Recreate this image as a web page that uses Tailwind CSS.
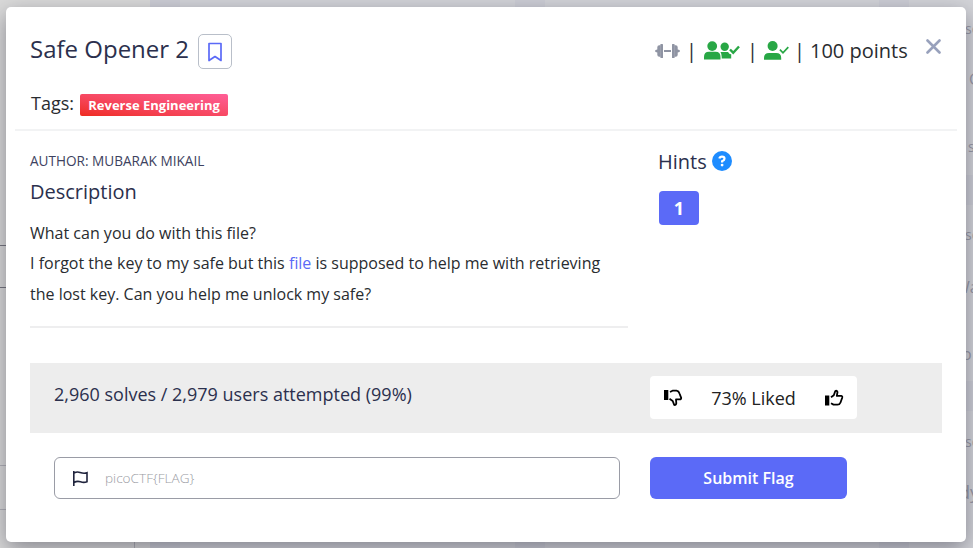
<!DOCTYPE html>
<html lang="en">
<head>
<meta charset="utf-8">
<title>Safe Opener 2</title>
<script src="https://cdn.jsdelivr.net/npm/@tailwindcss/browser@4"></script>
</head>
<body class="relative w-[973px] h-[548px] overflow-hidden bg-[#d3d4d9] font-['Open_Sans','Noto_Sans',sans-serif] text-[#292c30]">
<!-- Dimmed page behind the dialog -->
<div class="absolute inset-0 flex text-[#9a9ba8]" aria-hidden="true">
  <div class="w-[150px] bg-[#dadada]"></div>
  <div class="w-[30px] bg-[#cdced6]"></div>
  <div class="w-[335px]"></div>
  <div class="w-[30px] bg-[#cdced6]"></div>
  <div class="w-[334px]"></div>
  <div class="w-[30px] bg-[#cdced6]"></div>
  <div class="grow"></div>
  <div class="absolute left-0 top-[245px] w-2 h-[43px] border-y border-[#777780]"></div>
  <div class="absolute left-0 top-[465px] w-[135px] h-[45px] border-y border-[#b2b2b8]"></div>
  <div class="absolute left-[134px] top-[510px] w-px h-[38px] bg-[#b2b2b8]"></div>
  <div class="absolute left-[965px] top-[175px] w-2 h-[30px] bg-[#cdced6]"></div>
  <div class="absolute left-[965px] top-[381px] w-2 h-[30px] bg-[#cdced6]"></div>
  <span class="absolute left-[965px] top-[19px] text-sm">so</span>
  <span class="absolute left-[969px] top-[67px] text-base">G</span>
  <span class="absolute left-[968px] top-[137px] text-sm">so</span>
  <span class="absolute left-[965px] top-[225px] text-sm">so</span>
  <span class="absolute left-[955px] top-[275px] text-base">Wa</span>
  <span class="absolute left-[962px] top-[342px] text-base">o</span>
  <span class="absolute left-[965px] top-[432px] text-sm">so</span>
  <span class="absolute left-[959px] top-[478px] text-lg">dy</span>
</div>

<main class="relative ml-[6px] mt-[7px] w-[960px] h-[535px] rounded-[5px] bg-white shadow-[0_7px_22px_rgba(0,0,20,0.38)]">
  <header class="mx-[9px] h-[124px] border-b-2 border-[#f2f3f4] pl-[15px] pr-[16px]">
    <div class="flex h-[72px] items-start pt-[27px]">
      <h1 class="-mt-px w-[168px] whitespace-nowrap text-2xl leading-[32px] text-[#2b304d]">Safe Opener 2</h1>
      <button class="grid h-[35px] w-[34px] place-items-center rounded-[5px] border border-[#b9bfc9]" aria-label="Bookmark">
        <svg width="16" height="20" viewBox="0 0 16 20" fill="none" stroke="#5b6af7" stroke-width="1.7" stroke-linejoin="round"><path d="M2 1.5H14V18.5L8 14.5L2 18.5Z"/></svg>
      </button>
      <div class="ml-auto flex h-[34px] items-center text-xl">
        <svg class="-mt-px" width="25" height="16" viewBox="0 0 25 16" fill="#8f94a3"><path d="M5.4 1.6Q5.4 1 6 1H7.4Q8 1 8 1.6V14.4Q8 15 7.4 15H6Q5.4 15 5.4 14.4Z"/><path d="M5.7 2.2H4.3Q2.3 2.2 2.3 4.2V6.5Q0 6.7 0 8Q0 9.3 2.3 9.5V11.8Q2.3 13.8 4.3 13.8H5.7ZM9 7H16V9H9ZM17 1.6Q17 1 17.6 1H19Q19.6 1 19.6 1.6V14.4Q19.6 15 19 15H17.6Q17 15 17 14.4Z"/><path d="M19.3 2.2H20.7Q22.7 2.2 22.7 4.2V6.5Q25 6.7 25 8Q25 9.3 22.7 9.5V11.8Q22.7 13.8 20.7 13.8H19.3Z"/></svg>
        <span class="ml-[6px] w-[18px]">|</span>
        <svg width="36" height="20" viewBox="0 0 36 20" fill="#28a745"><circle cx="8.2" cy="5.1" r="4.9"/><path d="M0 18.6V16Q0 10.7 5 10.7H11.5Q16.5 10.7 16.5 16V18.6Z"/><circle cx="20.7" cy="5.7" r="4.2"/><path d="M16.5 11H24Q25.5 13.5 27.2 13.2V17.5H17.7V16Q17.7 13 16.5 11Z"/><path d="M26 8.5L29.2 11.7L35 5.5" fill="none" stroke="#28a745" stroke-width="2.4"/></svg>
        <span class="ml-[7px] w-[18px]">|</span>
        <svg class="-ml-[1px]" width="25" height="20" viewBox="0 0 25 20" fill="#28a745"><circle cx="8.6" cy="5" r="5"/><path d="M0 18.7V17Q0 12 5 12H12.2Q17.2 12 17.2 17V18.7Z"/><path d="M15.9 8.6L19 11.8L24.3 6.2" fill="none" stroke="#28a745" stroke-width="1.7"/></svg>
        <span class="ml-[5px] w-[16px]">|</span>
        <span class="w-[97px] whitespace-nowrap">100 points</span>
        <button class="mb-[10px] ml-[19px]" aria-label="Close"><svg width="15" height="15" viewBox="0 0 15 15" fill="none" stroke="#98a1bc" stroke-width="2.6" stroke-linecap="round"><path d="M1.5 1.5L13.5 13.5M13.5 1.5L1.5 13.5"/></svg></button>
      </div>
    </div>
    <div class="flex pl-px pt-[11px]">
      <span class="w-[49px] text-lg leading-[27px]">Tags:</span>
      <span class="mt-[4px] grid h-[22px] w-[148px] place-items-center whitespace-nowrap rounded-[2px] bg-gradient-to-tr from-[#ef2a1c] to-[#ff5e97] text-[13px] leading-[20px] font-bold text-white">Reverse Engineering</span>
    </div>
  </header>

  <div class="flex px-6">
    <section class="h-[197px] w-[598px] border-b-2 border-[#eeeeef] pt-[20px]">
      <div class="text-[13.6px] leading-[20px] text-[#3d4260]">AUTHOR: MUBARAK MIKAIL</div>
      <h2 class="mt-[6px] text-xl leading-[30px] text-[#2b304d]">Description</h2>
      <p class="mt-[11px] whitespace-nowrap text-base leading-[30.4px]">What can you do with this file?<br>I forgot the key to my safe but this <a class="text-[#5b6af7]">file</a> is supposed to help me with retrieving<br>the lost key. Can you help me unlock my safe?</p>
    </section>
    <section class="pl-[30px] pt-[16px]">
      <div class="flex items-center">
        <h2 class="w-[54px] text-xl leading-[30px] text-[#2b304d]">Hints</h2>
        <svg class="-mt-[3px]" width="20" height="20" viewBox="0 0 20 20"><circle cx="10" cy="10" r="10" fill="#1e8cff"/><path d="M7.4 7.6Q7.8 5.7 10 5.7Q12.5 5.7 12.5 7.8Q12.5 9.2 10.1 10.3V11.4" fill="none" stroke="#fff" stroke-width="2.2"/><circle cx="10.1" cy="14.1" r="1.4" fill="#fff"/></svg>
      </div>
      <button class="ml-px mt-[14px] grid h-[34px] w-[40px] place-items-center rounded-[4px] bg-[#5b6af7] text-lg font-bold text-white">1</button>
    </section>
  </div>

  <section class="mx-6 mt-[35px] flex h-[70px] bg-[#ededed] pl-6">
    <div class="w-[596px] pt-[16px] text-lg leading-[30px] text-[#2b304d]">2,960 solves / 2,979 users attempted (99%)</div>
    <div class="mt-[13px] flex h-[43px] w-[207px] items-center justify-between rounded-[4px] bg-white px-[13px] text-lg text-[#222]">
      <svg width="20" height="18" viewBox="0 0 20 18" fill="none" stroke="#000" stroke-width="1.8" stroke-linejoin="round"><path d="M1 1H5.3V11H1Z" fill="#000" stroke="none"/><path d="M7 3L9.5 1.7H13.5Q15.8 2 16.5 4.5L18.2 8.8Q18.3 10.4 16.6 10.4H13L13.3 14.2Q12.8 16.4 11.2 15.9L9.7 12L6.5 9.8"/></svg>
      <span class="whitespace-nowrap">73% Liked</span>
      <svg width="20" height="18" viewBox="0 0 20 18" fill="none" stroke="#000" stroke-width="1.8" stroke-linejoin="round"><path d="M1 6.5H5.3V16.5H1Z" fill="#000" stroke="none"/><path d="M7 8.3L9.8 6.3L11.2 2.2Q12.8 1 13.5 3L12.8 6.8H17.3Q18.6 7.1 18.2 8.7L16.5 13.5Q15.8 15.6 13.5 15.6H9.5L7 14.3"/></svg>
    </div>
  </section>

  <form class="flex pl-12 pt-[24px]">
    <label class="flex h-[42px] w-[566px] items-center rounded-[6px] border border-[#9a9ca6] pl-[17px]">
      <svg width="18" height="17" viewBox="0 0 18 17" fill="none" stroke="#20243d" stroke-width="1.6"><path d="M1.8 1V16M2 3Q5 1.4 8 2.4Q12 3.8 15 2.7V11.7Q12 13 8.5 11.8Q5 10.7 2 12.5"/></svg>
      <input class="ml-[15px] w-[420px] text-[13.6px] font-light outline-none placeholder:text-[#9b9ca4]" placeholder="picoCTF{FLAG}">
    </label>
    <button type="button" class="ml-[30px] h-[42px] w-[197px] rounded-[6px] bg-[#5b6af7] text-base font-semibold text-white">Submit Flag</button>
  </form>
</main>
</body>
</html>
